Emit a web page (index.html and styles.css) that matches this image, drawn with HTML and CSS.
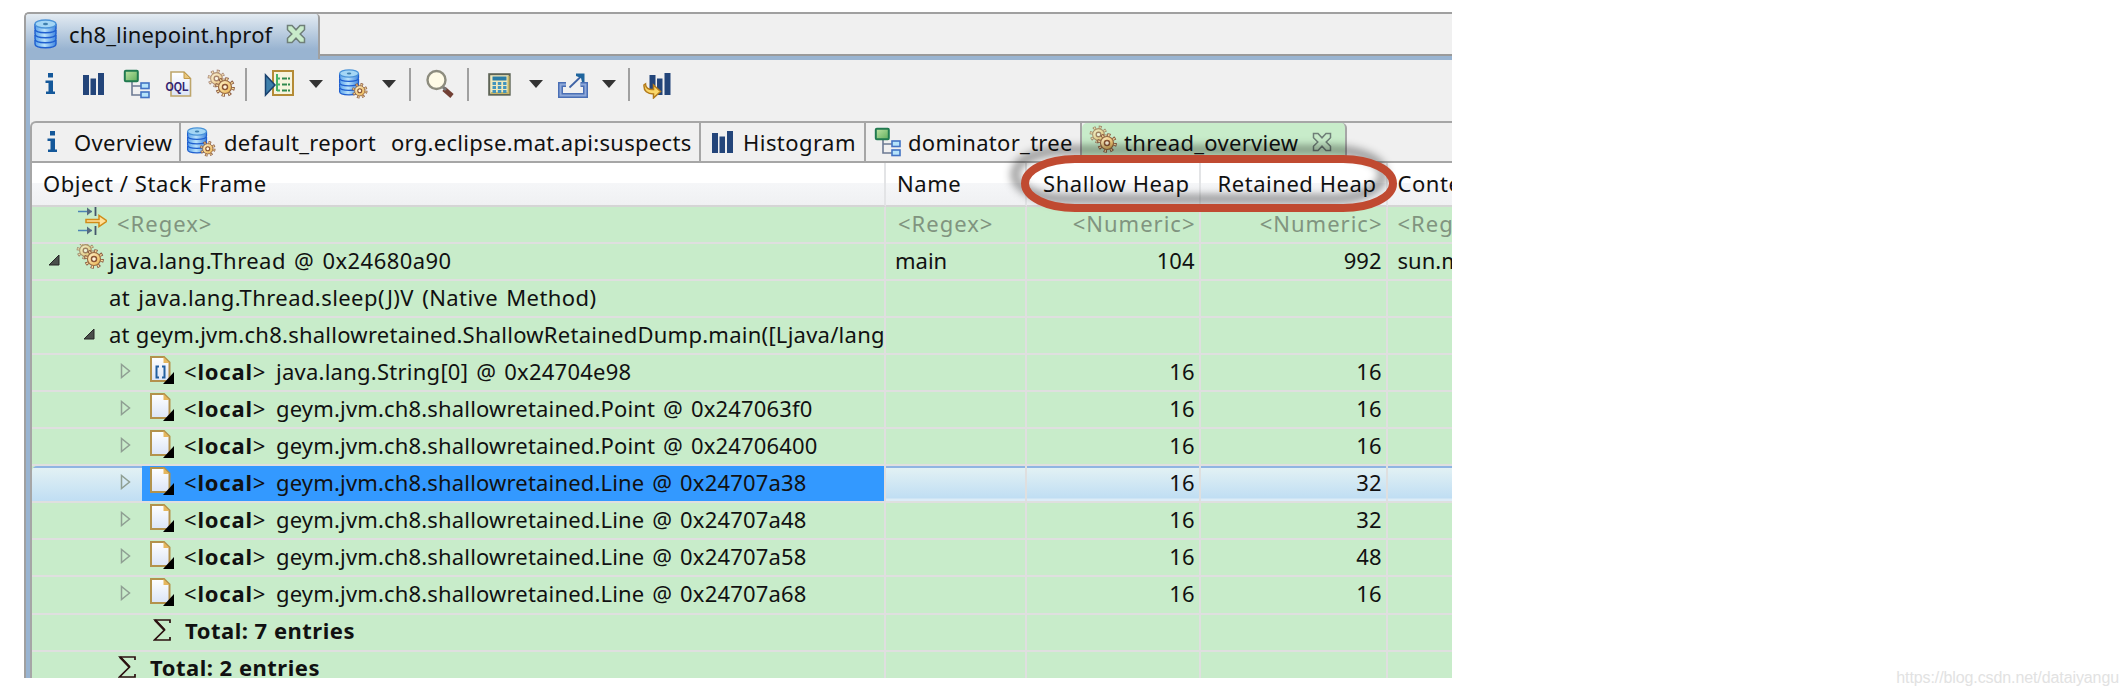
FILE: index.html
```html
<!DOCTYPE html>
<html lang="en">
<head>
<meta charset="utf-8">
<title>ch8_linepoint.hprof</title>
<link rel="stylesheet" href="styles.css">
</head>
<body>
<svg class="defs" width="0" height="0" aria-hidden="true">
  <defs>
    <linearGradient id="gold" x1="0" y1="0" x2="1" y2="1"><stop offset="0" stop-color="#fff3cf"/><stop offset="1" stop-color="#eab24a"/></linearGradient>
    <linearGradient id="green" x1="0" y1="0" x2="1" y2="1"><stop offset="0" stop-color="#bfe3a4"/><stop offset="1" stop-color="#5fae5c"/></linearGradient>
    <linearGradient id="paper" x1="0" y1="0" x2="0" y2="1"><stop offset="0" stop-color="#ffffff"/><stop offset="1" stop-color="#dbe4f6"/></linearGradient>
    <linearGradient id="dbfill" x1="0" y1="0" x2="1" y2="0"><stop offset="0" stop-color="#5aa2ec"/><stop offset=".45" stop-color="#b9e2fb"/><stop offset="1" stop-color="#3f86e0"/></linearGradient>
    <symbol id="info" viewBox="0 0 30 30"><g fill="#14589a"><rect x="13" y="4" width="5" height="4.5"/><path d="M10.500 11.500h7.500v11h2v2.500h-9v-2.500h2.500v-8.500h-3z"/></g></symbol>
    <symbol id="bars" viewBox="0 0 30 30"><g fill="#23457a"><rect x="4" y="6" width="6" height="20"/><rect x="11.500" y="9.500" width="5.500" height="16.500"/><rect x="19" y="4" width="6" height="22"/></g></symbol>
    <symbol id="tree" viewBox="0 0 30 30"><path d="M10 12v14h10M10 17h10" fill="none" stroke="#6c7a93" stroke-width="1.600"/><rect x="2.800" y="1.800" width="13" height="10.500" rx="1" fill="url(#green)" stroke="#217a50" stroke-width="2"/><rect x="19" y="14" width="8" height="5.500" fill="#b5e3fb" stroke="#4373c4" stroke-width="1.600"/><rect x="19" y="23" width="8" height="5.500" fill="#b5e3fb" stroke="#4373c4" stroke-width="1.600"/></symbol>
    <symbol id="gearshape" viewBox="-10 -10 20 20" overflow="visible"><circle r="7.900" fill="none" stroke="#8b5a42" stroke-width="3" stroke-dasharray="3.100 3.104"/><circle r="7.600" fill="none" stroke="#fbe3a0" stroke-width="2" stroke-dasharray="1.300 4.669" stroke-dashoffset="-.9"/><circle r="6.200" fill="url(#gold)" stroke="#9a6a40" stroke-width="1.100"/><circle r="2.400" fill="#fff5dc" stroke="#8b5535" stroke-width="1.400"/></symbol>
    <symbol id="gears" viewBox="0 0 30 30"><use href="#gearshape" x="1" y="0" width="19" height="19" opacity=".7"/><use href="#gearshape" x="8.500" y="7.500" width="21" height="21"/></symbol>
    <symbol id="dbase" viewBox="0 0 30 30"><g fill="url(#dbfill)" stroke="#1f5fcf" stroke-width="1.400"><path d="M4 21v4c0 5 21 5 21 0v-4"/><path d="M4 16v4c0 5 21 5 21 0v-4"/><path d="M4 11v4c0 5 21 5 21 0v-4"/><path d="M4 5v5c0 5 21 5 21 0v-5"/><ellipse cx="14.500" cy="5" rx="10.500" ry="4" fill="#a4d6f5" stroke="#4a93d8"/></g><ellipse cx="14.500" cy="5" rx="2.500" ry="1.200" fill="#3f7fae"/></symbol>
    <symbol id="dbgear" viewBox="0 0 30 30"><use href="#dbase" x="-2" y="0" width="27" height="27"/><use href="#gearshape" x="13.500" y="13.500" width="16.500" height="16.500"/></symbol>
    <symbol id="oql" viewBox="0 0 30 30"><path d="M7 3h13l6.500 6.500V27H7z" fill="url(#paper)" stroke="#bda56b" stroke-width="1.600"/><path d="M20 3v6.500h6.500z" fill="#e9c77c" stroke="#c19a4c"/><text x="1.500" y="21.500" class="oql-label" textLength="23" lengthAdjust="spacingAndGlyphs">OQL</text></symbol>
    <symbol id="run" viewBox="0 0 30 30"><rect x="9" y="2" width="20" height="24" fill="#f6f4de" stroke="#b48b36" stroke-width="2"/><g fill="none" stroke="#45b267" stroke-width="2"><path d="M13 5v17M13 9.500h3M13 15.500h3M13 21.500h3"/><path d="M18 9.500h8M18 15.500h8M18 21.500h8" stroke="#30894e" stroke-dasharray="5 1 2 1"/></g><path d="M1.500 6v20L11 16z" fill="#3d7fab" stroke="#19416e" stroke-width="1.500"/></symbol>
    <symbol id="search" viewBox="0 0 30 30"><path d="M19 20l8 7" stroke="#713f34" stroke-width="5"/><path d="M18 18l3 3" stroke="#777" stroke-width="3"/><circle cx="11.500" cy="11" r="9" fill="#fffbe6" stroke="#8d8c7e" stroke-width="2.400"/></symbol>
    <symbol id="calc" viewBox="0 0 30 30"><rect x="4.200" y="5.200" width="20.500" height="20.500" fill="#efe9bd" stroke="#5f6557" stroke-width="2"/><path d="M6 24h17.500V7" fill="none" stroke="#c7b668" stroke-width="2"/><path d="M7.500 9.500h14" stroke="#2a7ca6" stroke-width="4"/><g stroke="#4294bd" stroke-width="3" stroke-dasharray="3.500 1.800"><path d="M7.500 14.500h14M7.500 18.500h14M7.500 22.500h14"/></g></symbol>
    <symbol id="export" viewBox="0 0 30 30"><path d="M8 15.500H2.500v11h25V15.500h-5" fill="none" stroke="#4a6fb5" stroke-width="5"/><path d="M8 15.500H2.500v11h25V15.500h-5" fill="none" stroke="#8ea9da" stroke-width="2"/><path d="M11.500 18.500L24 6.500" stroke="#3f63a5" stroke-width="1.800"/><path d="M18 4.500h8.500v8.500h-2.500l-1-4-5-2z" fill="#1f659d"/></symbol>
    <symbol id="regroup" viewBox="0 0 30 30"><g fill="#23457a"><rect x="7.500" y="6" width="6" height="15"/><rect x="15" y="9.500" width="5.500" height="16.500"/><rect x="22.500" y="4" width="6" height="22"/></g><path d="M3.500 15c0 4 3 6 8 5.500V16l7 6.500-7 6.500v-4c-6 0-10-3-9.500-9z" fill="#fbd768" stroke="#b37b1b" stroke-width="1.500"/></symbol>
    <symbol id="drop" viewBox="0 0 14 10"><path d="M0 1h14L7 9z" fill="#333"/></symbol>
    <symbol id="close" viewBox="0 0 20 20"><path d="M1.500 1.500h4.500l4 4.300 4-4.300h4.500v4.200L14.200 10l4.300 4.300v4.200H14l-4-4.300-4 4.300H1.500v-4.200L5.800 10 1.500 5.700z" fill="#c8ecca" stroke="#6f7f78" stroke-width="1.500"/></symbol>
    <symbol id="filter" viewBox="0 0 30 30"><path d="M1 5.500h14M1 24.500h14" stroke="#4c83b5" stroke-width="1.600"/><path d="M10 1.500l5 4-5 4zM10 20.500l5 4-5 4z" fill="#566b80"/><path d="M18.500 1v9M18.500 20v9" stroke="#43566b" stroke-width="1.800"/><path d="M9 13.500h13V9.500l8 5.500-8 5.500v-4H9z" fill="#ffe19a" stroke="#d18c18" stroke-width="1.500"/></symbol>
    <symbol id="file" viewBox="0 0 26 30"><path d="M2 2h13l5.500 5.500V26H2z" fill="url(#paper)" stroke="#b3924c" stroke-width="2"/><path d="M14.500 2v6h6z" fill="#e6b75e"/><path d="M25 17v12H14z" fill="#000"/></symbol>
    <symbol id="array" viewBox="0 0 26 30"><use href="#file" width="26" height="30"/><path d="M10 11.500H7.500v11H10M13 11.500h2.500v11H13" fill="none" stroke="#225f9f" stroke-width="2"/></symbol>
    <symbol id="open" viewBox="0 0 12 12"><path d="M11 1v10H1z" fill="#4a4f4b" stroke="#262626"/></symbol>
    <symbol id="shut" viewBox="0 0 12 16"><path d="M1.500 1.500v13l8-6.500z" fill="none" stroke="#8f9f93" stroke-width="1.500"/></symbol>
    <symbol id="sigma" viewBox="0 0 18 24"><path d="M17 5V2H2l9.500 10L1.500 22H17v-3" fill="none" stroke="#2b1010" stroke-width="1.700"/><path d="M2 2l9.500 10" stroke="#2b1010" stroke-width="2.500"/></symbol>
  </defs>
</svg>

<main class="window">
  <header class="editor-tabs">
    <div class="editor-tab">
      <svg class="icon"><use href="#dbase"/></svg>
      <span class="title">ch8_linepoint.hprof</span>
      <svg class="close"><use href="#close"/></svg>
    </div>
  </header>
  <div class="frame">
    <div class="toolbar">
      <svg class="icon"><use href="#info"/></svg>
      <svg class="icon g14"><use href="#bars"/></svg>
      <svg class="icon g13"><use href="#tree"/></svg>
      <svg class="icon g12"><use href="#oql"/></svg>
      <svg class="icon g12"><use href="#gears"/></svg>
      <i class="sep g9"></i>
      <svg class="icon g17"><use href="#run"/></svg>
      <svg class="drop g15"><use href="#drop"/></svg>
      <svg class="icon g15"><use href="#dbgear"/></svg>
      <svg class="drop g14"><use href="#drop"/></svg>
      <i class="sep g13"></i>
      <svg class="icon g14"><use href="#search"/></svg>
      <i class="sep g12"></i>
      <svg class="icon calc"><use href="#calc"/></svg>
      <svg class="drop g14"><use href="#drop"/></svg>
      <svg class="icon g15"><use href="#export"/></svg>
      <svg class="drop g14"><use href="#drop"/></svg>
      <i class="sep g12"></i>
      <svg class="icon g12"><use href="#regroup"/></svg>
    </div>
    <nav class="tabs">
      <div class="tab t-overview"><svg class="icon"><use href="#info"/></svg><span>Overview</span></div>
      <div class="tab t-report"><svg class="icon"><use href="#dbgear"/></svg><span>default_report</span><span class="query">org.eclipse.mat.api:suspects</span></div>
      <div class="tab t-histogram"><svg class="icon"><use href="#bars"/></svg><span>Histogram</span></div>
      <div class="tab t-tree"><svg class="icon"><use href="#tree"/></svg><span>dominator_tree</span></div>
      <div class="tab t-thread active"><svg class="icon"><use href="#gears"/></svg><span>thread_overview</span><svg class="close"><use href="#close"/></svg></div>
    </nav>
    <div class="grid">
      <div class="row head"><div>Object / Stack Frame</div><div>Name</div><div class="num">Shallow Heap</div><div class="num">Retained Heap</div><div>Context Class Loader</div></div>
      <div class="row hint"><div class="in-filter"><svg class="icon"><use href="#filter"/></svg><span>&lt;Regex&gt;</span></div><div>&lt;Regex&gt;</div><div class="num">&lt;Numeric&gt;</div><div class="num">&lt;Numeric&gt;</div><div>&lt;Regex&gt;</div></div>
      <div class="row"><div class="in-thread"><svg class="open"><use href="#open"/></svg><svg class="icon"><use href="#gears"/></svg><span>java.lang.Thread @ 0x24680a90</span></div><div>main</div><div class="num">104</div><div class="num">992</div><div>sun.misc.Launcher</div></div>
      <div class="row"><div class="in-frame"><span>at java.lang.Thread.sleep(J)V (Native Method)</span></div><div></div><div></div><div></div><div></div></div>
      <div class="row"><div class="in-main"><svg class="open"><use href="#open"/></svg><span class="stack">at geym.jvm.ch8.shallowretained.ShallowRetainedDump.main([Ljava/lang/String;)V</span></div><div></div><div></div><div></div><div></div></div>
      <div class="row"><div class="in-local array"><svg class="shut"><use href="#shut"/></svg><svg class="file"><use href="#array"/></svg><span class="tag">&lt;<b>local</b>&gt;</span><span>java.lang.String[0] @ 0x24704e98</span></div><div></div><div class="num">16</div><div class="num">16</div><div></div></div>
      <div class="row"><div class="in-local"><svg class="shut"><use href="#shut"/></svg><svg class="file"><use href="#file"/></svg><span class="tag">&lt;<b>local</b>&gt;</span><span>geym.jvm.ch8.shallowretained.Point @ 0x247063f0</span></div><div></div><div class="num">16</div><div class="num">16</div><div></div></div>
      <div class="row"><div class="in-local"><svg class="shut"><use href="#shut"/></svg><svg class="file"><use href="#file"/></svg><span class="tag">&lt;<b>local</b>&gt;</span><span>geym.jvm.ch8.shallowretained.Point @ 0x24706400</span></div><div></div><div class="num">16</div><div class="num">16</div><div></div></div>
      <div class="row selected"><div class="in-local"><svg class="shut"><use href="#shut"/></svg><svg class="file"><use href="#file"/></svg><span class="tag">&lt;<b>local</b>&gt;</span><span>geym.jvm.ch8.shallowretained.Line @ 0x24707a38</span></div><div></div><div class="num">16</div><div class="num">32</div><div></div></div>
      <div class="row"><div class="in-local"><svg class="shut"><use href="#shut"/></svg><svg class="file"><use href="#file"/></svg><span class="tag">&lt;<b>local</b>&gt;</span><span>geym.jvm.ch8.shallowretained.Line @ 0x24707a48</span></div><div></div><div class="num">16</div><div class="num">32</div><div></div></div>
      <div class="row"><div class="in-local"><svg class="shut"><use href="#shut"/></svg><svg class="file"><use href="#file"/></svg><span class="tag">&lt;<b>local</b>&gt;</span><span>geym.jvm.ch8.shallowretained.Line @ 0x24707a58</span></div><div></div><div class="num">16</div><div class="num">48</div><div></div></div>
      <div class="row"><div class="in-local"><svg class="shut"><use href="#shut"/></svg><svg class="file"><use href="#file"/></svg><span class="tag">&lt;<b>local</b>&gt;</span><span>geym.jvm.ch8.shallowretained.Line @ 0x24707a68</span></div><div></div><div class="num">16</div><div class="num">16</div><div></div></div>
      <div class="row"><div class="in-total"><svg class="sigma"><use href="#sigma"/></svg><b>Total: 7 entries</b></div><div></div><div></div><div></div><div></div></div>
      <div class="row"><div class="in-total outer"><svg class="sigma"><use href="#sigma"/></svg><b>Total: 2 entries</b></div><div></div><div></div><div></div><div></div></div>
    </div>
  </div>
</main>
<svg class="callout" viewBox="0 0 410 90"><rect x="25" y="24" width="368" height="49" rx="50" ry="24.500"/></svg>
<footer class="watermark">https://blog.csdn.net/dataiyangu</footer>
</body>
</html>
```
FILE: styles.css
```css
* { box-sizing: border-box; }
body {
  margin: 0;
  width: 2128px;
  height: 696px;
  position: relative;
  overflow: hidden;
  background: #fff;
  color: #111;
  font: 22px/30px "Noto Sans", "Open Sans", sans-serif;
}
svg { display: block; flex: none; }
.defs { position: absolute; }
.icon { width: 30px; height: 30px; }
.close { width: 20px; height: 20px; }
.drop { width: 14px; height: 10px; }
.open { width: 12px; height: 12px; }
.shut { width: 12px; height: 16px; }
.file { width: 26px; height: 30px; }
.sigma { width: 18px; height: 24px; }
.oql-label { font: bold 12px "Liberation Sans", sans-serif; fill: #34246f; }
.g9 { margin-left: 9px; }
.g12 { margin-left: 12px; }
.g13 { margin-left: 13px; }
.g14 { margin-left: 14px; }
.g15 { margin-left: 15px; }
.g17 { margin-left: 17px; }
.calc { margin-left: 16px; }

.window {
  width: 1428px;
  height: 666px;
  margin: 12px 0 0 24px;
  overflow: hidden;
  border-top: 2px solid #a0a0a0;
  border-left: 2px solid #a0a0a0;
  border-top-left-radius: 5px;
  background: #f0f0f0;
}
.editor-tabs { height: 42px; border-bottom: 2px solid #9a9a9a; }
.editor-tab {
  display: flex;
  align-items: center;
  width: 294px;
  height: 45px;
  padding: 0 0 5px 5px;
  position: relative;
  border-right: 2px solid #a0a0a0;
  border-top-right-radius: 4px;
  background: linear-gradient(#e3ebf2, #99b4d1 78%);
}
.editor-tab .title { margin-left: 8px; width: 205px; letter-spacing: .15px; white-space: nowrap; }
.editor-tab .close { margin-left: 12px; }

.frame { border-left: 4px solid #99b4d1; border-top: 4px solid #99b4d1; }
.toolbar { display: flex; align-items: center; height: 61px; padding: 0 0 13px 5px; }
.sep { width: 2px; height: 33px; background: #a0a0a0; }

.tabs {
  display: flex;
  height: 42px;
  border: solid #a6a6a6;
  border-width: 2px 0 2px 2px;
  border-top-left-radius: 6px;
}
.tab { display: flex; align-items: center; flex: none; white-space: nowrap; border-right: 2px solid #a6a6a6; padding-bottom: 1px; }
.tab span { letter-spacing: .3px; }
.t-overview { width: 149px; padding-left: 5px; }
.t-overview span { margin-left: 7px; }
.t-report { width: 520px; padding-left: 5px; }
.t-report span { margin-left: 8px; }
.t-report .query { margin-left: 15px; }
.t-histogram { width: 165px; padding-left: 7px; }
.t-histogram span { margin-left: 5px; letter-spacing: .45px; }
.t-tree { width: 216px; padding-left: 7px; }
.t-tree span { margin-left: 5px; }
.t-thread { width: 265px; padding-left: 6px; }
.t-thread .icon { margin-bottom: 3px; }
.t-thread span { margin-left: 6px; }
.t-thread .close { margin-left: auto; margin-right: 13px; }
.active { background: #c8ecca; border-radius: 5px 5px 0 0; }

.grid { border-left: 2px solid #a6a6a6; }
.row {
  display: grid;
  grid-template-columns: 854px 140.500px 174px 187px 65px;
  height: 37.050px;
  background: #c8ecca;
}
.row > div {
  display: flex;
  align-items: center;
  overflow: hidden;
  white-space: nowrap;
  padding-left: 9px;
  padding-bottom: 3px;
  border-right: 2px solid #dfdfdf;
  border-bottom: 2px solid #dfdfdf;
}
.row > div:last-child { border-right: 0; padding-left: 10px; }
.row > .num { justify-content: flex-end; padding-right: 4px; }
.head { height: 44px; background: linear-gradient(#fff 45%, #f5f6f8 46%, #eff0f2); letter-spacing: .55px; }
.head > div { padding-left: 11px; padding-bottom: 3px; border-color: #e3e4e6; border-bottom-color: #d5d5d5; }
.head > .num { padding-right: 9px; }
.hint { color: #80947f; letter-spacing: 1px; }
.hint > div { padding-left: 12px; }
.hint > .num { padding-right: 3px; }

.row > .in-filter { padding-left: 45px; }
.in-filter .icon { margin-bottom: 4px; }
.in-filter span { margin-left: 10px; }
.row > .in-thread { padding-left: 16px; letter-spacing: .45px; word-spacing: 2px; }
.in-thread .icon { margin: 0 4px 8px 15px; }
.row > .in-frame { padding-left: 77px; letter-spacing: .43px; word-spacing: 2px; }
.row > .in-main { padding-left: 51px; letter-spacing: .25px; }
.in-main .stack { margin-left: 14px; }
.row > .in-local { padding-left: 88px; letter-spacing: .17px; word-spacing: 2px; }
.row > .array { letter-spacing: .25px; }
.in-local .file { margin: 0 9px 2px 17px; }
.in-local .tag { width: 92px; letter-spacing: .8px; }
.row > .in-total { padding-left: 121px; padding-bottom: 5px; letter-spacing: .5px; }
.row > .outer { padding-left: 86px; }
.in-total b { margin-left: 14px; }

.selected > div { background: linear-gradient(#8fb5e2 2px, #e2f1f4 2px, #c0def3 32px, #dcecf7 33px); }
.selected > .in-local { background: linear-gradient(90deg, transparent 110px, #3399ff 110px), linear-gradient(#8fb5e2 2px, #e2f1f4 2px, #c0def3); border-top-left-radius: 5px; }

.callout {
  position: absolute;
  left: 1000px;
  top: 135px;
  width: 410px;
  height: 90px;
  fill: none;
  stroke: #c04a31;
  stroke-width: 8px;
  filter: drop-shadow(-10px -9px 4px rgba(0, 0, 0, .42));
}
.watermark {
  position: absolute;
  right: 9px;
  bottom: 8px;
  font: 16px/20px "Liberation Sans", Arial, sans-serif;
  letter-spacing: -.1px;
  color: #e2e2e2;
}
```
